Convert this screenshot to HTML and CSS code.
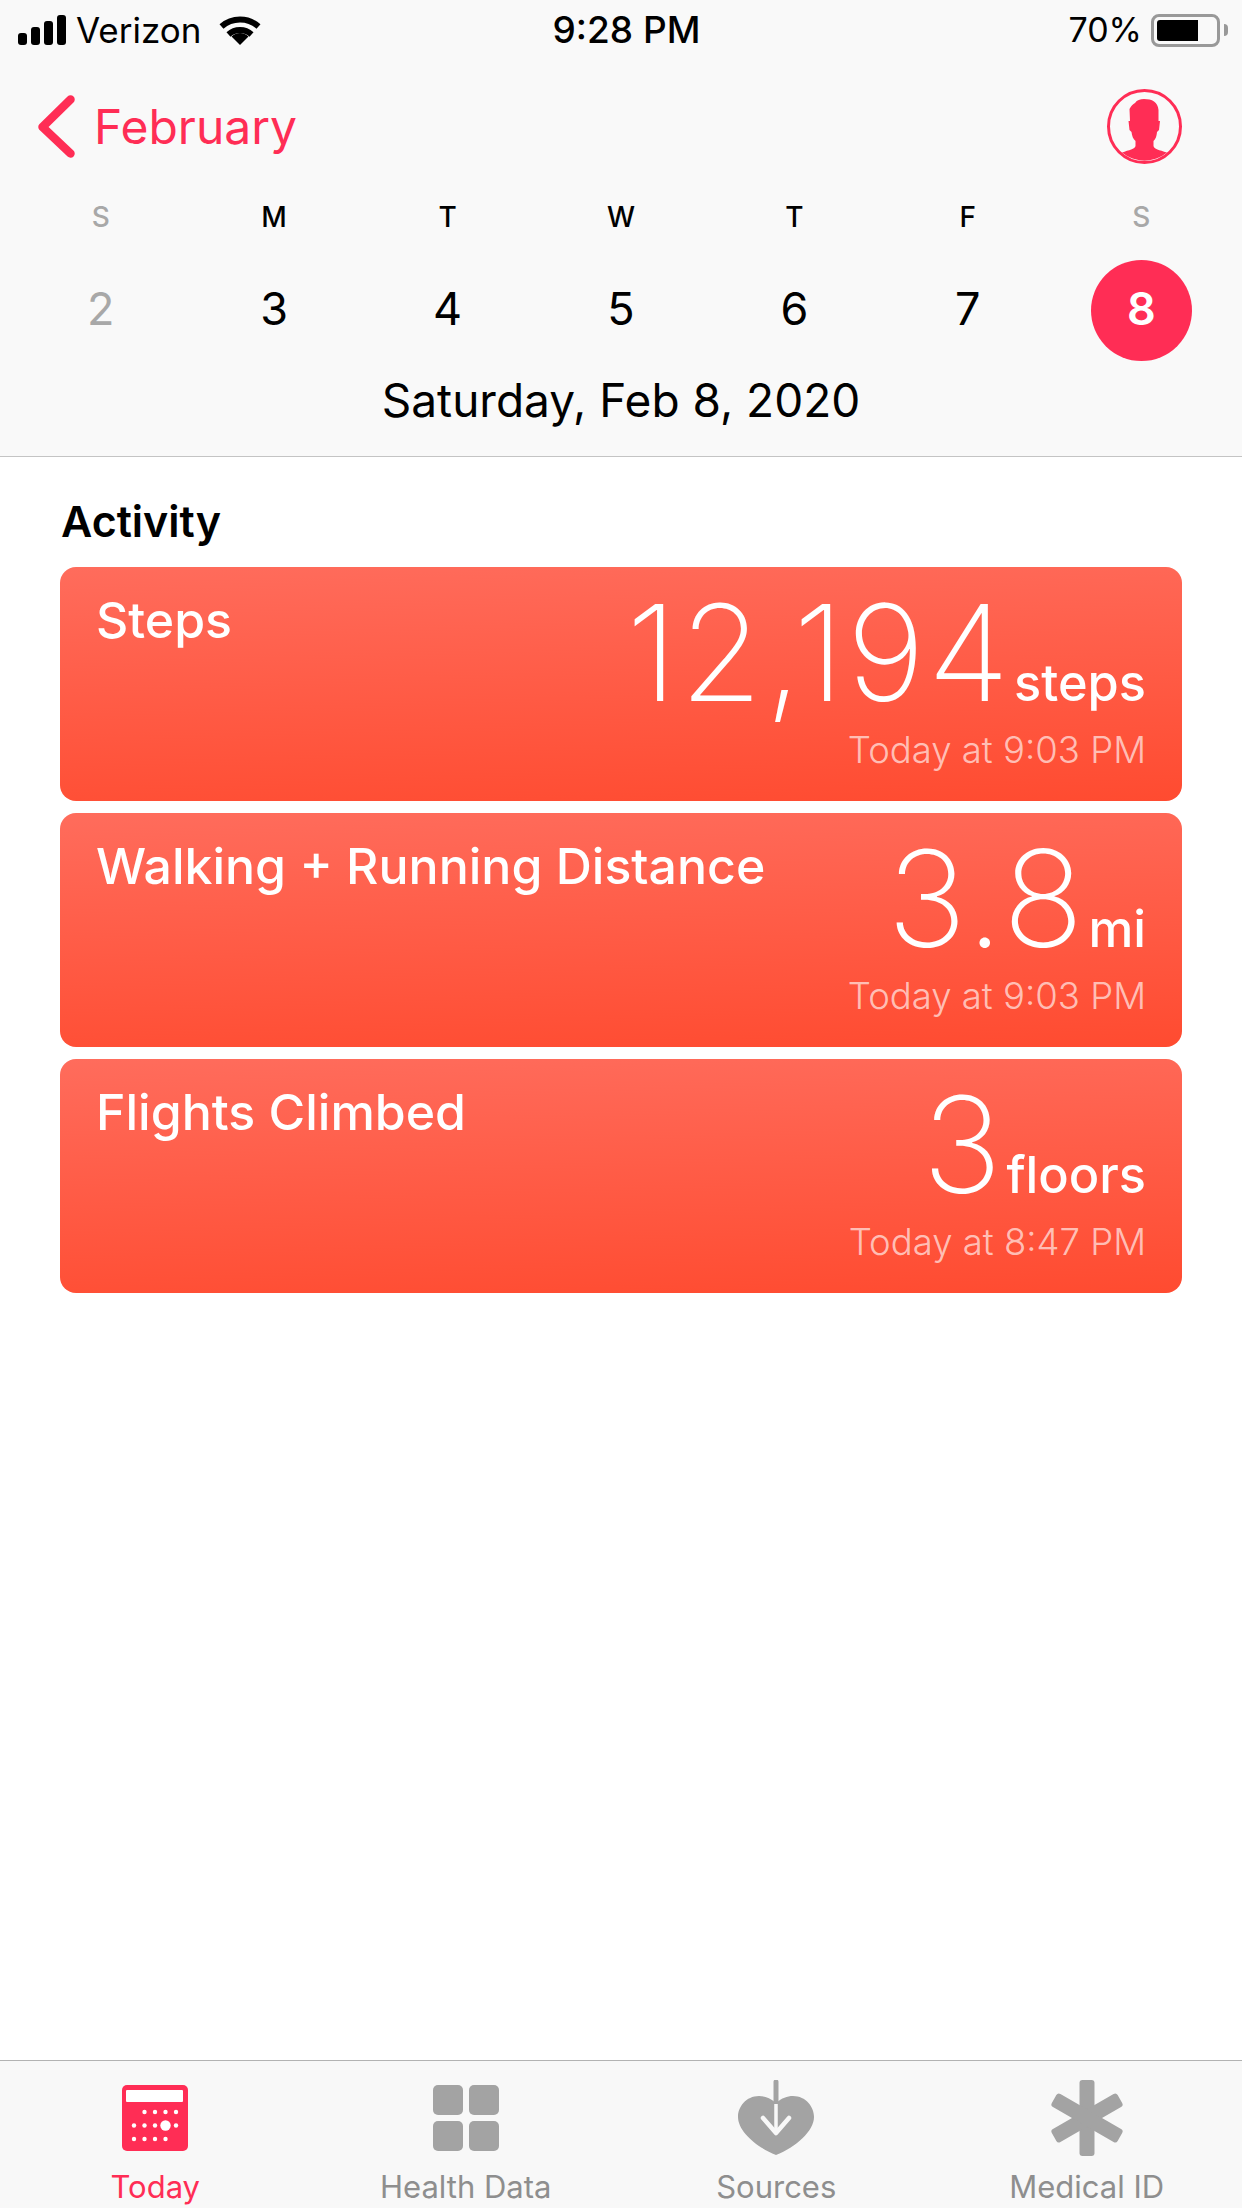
FILE: index.html
```html
<!DOCTYPE html>
<html lang="en">
<head>
  <meta charset="UTF-8">
  <meta name="viewport" content="width=device-width, initial-scale=1.0">
  <title>Today</title>
  <link rel="stylesheet" href="styles.css">
</head>
<body>
  <div class="page">
    <header class="top">
      <!-- status bar -->
      <div class="status">
        <div class="status-left">
          <svg class="signal" width="48" height="30" viewBox="0 0 48 30" fill="#000">
            <rect x="0" y="18" width="9" height="12" rx="3"/>
            <rect x="13" y="12" width="9" height="18" rx="3"/>
            <rect x="26" y="6" width="9" height="24" rx="3"/>
            <rect x="39" y="0" width="9" height="30" rx="3"/>
          </svg>
          <span class="carrier">Verizon</span>
          <svg class="wifi" width="42" height="30" viewBox="0 0 42 30" fill="none" stroke="#000" stroke-width="6">
            <path d="M2.5 11.5A28 28 0 0 1 39.5 11.5"/>
            <path d="M9.5 19.5A17 17 0 0 1 32.5 19.5"/>
            <path d="M21 30L12.5 21.5A12 12 0 0 1 29.5 21.5Z" fill="#000" stroke="none"/>
          </svg>
        </div>
        <div class="time">9:28 PM</div>
        <div class="status-right">
          <span class="percent">70%</span>
          <div class="battery"><div class="battery-fill"></div></div>
          <div class="battery-nub"></div>
        </div>
      </div>

      <div class="nav">
        <div class="back">
          <svg width="37" height="63" viewBox="0 0 37 63" fill="none" stroke="#ff2d55" stroke-width="8.5" stroke-linecap="round" stroke-linejoin="round">
            <path d="M32.5 4.5L4.5 32L32.5 58.5"/>
          </svg>
          <span class="month">February</span>
        </div>
        <svg class="profile" width="75" height="75" viewBox="0 0 75 75">
          <circle cx="37.5" cy="37.5" r="36" fill="none" stroke="#ff2d55" stroke-width="3"/>
          <path fill="#ff2d55" d="M37 10C45 10 51 13 51.5 21L51.5 32L53 32L52 41L50 43C49.5 48 48.5 50 46.5 52L46.5 57C47 60 52 61 60 63.5A35 35 0 0 1 15 63.5C22 61 28 60 28.5 57L28.5 52C26 50 25 47 24.5 43L22.5 41L21.5 32L23 32L22.5 20C24 17 26 15 28 14C30 11 33 10 37 10Z"/>
        </svg>
      </div>

      <div class="week">
        <div class="day-col">
          <span class="weekday muted">S</span>
          <span class="date muted">2</span>
        </div>
        <div class="day-col">
          <span class="weekday">M</span>
          <span class="date">3</span>
        </div>
        <div class="day-col">
          <span class="weekday">T</span>
          <span class="date">4</span>
        </div>
        <div class="day-col">
          <span class="weekday">W</span>
          <span class="date">5</span>
        </div>
        <div class="day-col">
          <span class="weekday">T</span>
          <span class="date">6</span>
        </div>
        <div class="day-col">
          <span class="weekday">F</span>
          <span class="date">7</span>
        </div>
        <div class="day-col">
          <span class="weekday muted">S</span>
          <span class="date selected">8</span>
        </div>
      </div>

      <div class="full-date">Saturday, Feb 8, 2020</div>
    </header>

    <main class="content">
      <h2 class="section-title">Activity</h2>

      <div class="card">
        <div class="card-name">Steps</div>
        <div class="card-data">
          <div class="reading"><span class="value">12,194</span><span class="unit">steps</span></div>
          <div class="stamp">Today at 9:03 PM</div>
        </div>
      </div>

      <div class="card">
        <div class="card-name">Walking + Running Distance</div>
        <div class="card-data">
          <div class="reading"><span class="value">3.8</span><span class="unit">mi</span></div>
          <div class="stamp">Today at 9:03 PM</div>
        </div>
      </div>

      <div class="card">
        <div class="card-name">Flights Climbed</div>
        <div class="card-data">
          <div class="reading"><span class="value">3</span><span class="unit">floors</span></div>
          <div class="stamp">Today at 8:47 PM</div>
        </div>
      </div>
    </main>

    <nav class="tabs">
      <div class="tab active">
        <div class="tab-icon">
          <svg width="66" height="66" viewBox="0 0 66 66">
            <rect width="66" height="66" rx="5" fill="#ff2d55"/>
            <rect x="4" y="5" width="57" height="12" rx="1" fill="#fff"/>
            <g fill="#fff">
              <circle cx="22.5" cy="27" r="2.2"/><circle cx="33" cy="27" r="2.2"/><circle cx="43.5" cy="27" r="2.2"/><circle cx="54" cy="27" r="2.2"/>
              <circle cx="12" cy="40.5" r="2.2"/><circle cx="22.5" cy="40.5" r="2.2"/><circle cx="33" cy="40.5" r="2.2"/><circle cx="43.5" cy="40.5" r="5.2"/><circle cx="54" cy="40.5" r="2.2"/>
              <circle cx="12" cy="54" r="2.2"/><circle cx="22.5" cy="54" r="2.2"/><circle cx="33" cy="54" r="2.2"/><circle cx="43.5" cy="54" r="2.2"/>
            </g>
          </svg>
        </div>
        <span class="tab-label">Today</span>
      </div>
      <div class="tab">
        <div class="tab-icon">
          <svg width="66" height="66" viewBox="0 0 66 66" fill="#a3a3a3">
            <rect width="30" height="30" rx="5"/>
            <rect x="36" width="30" height="30" rx="5"/>
            <rect y="36" width="30" height="30" rx="5"/>
            <rect x="36" y="36" width="30" height="30" rx="5"/>
          </svg>
        </div>
        <span class="tab-label">Health Data</span>
      </div>
      <div class="tab">
        <div class="tab-icon">
          <svg width="76" height="76" viewBox="0 0 76 76">
            <path fill="#a3a3a3" d="M38 23C32 18 27 16 21 16C8 16 0 27 0 37C0 51 18 67 38 75C58 67 76 51 76 37C76 27 68 16 55 16C49 16 44 18 38 23Z"/>
            <path d="M38 2V24" stroke="#a3a3a3" stroke-width="5" stroke-linecap="round"/>
            <path d="M38 24V52" stroke="#f8f8f8" stroke-width="3.5"/>
            <path d="M25 38L38 53L51 38" fill="none" stroke="#f8f8f8" stroke-width="4.5" stroke-linecap="round" stroke-linejoin="round"/>
          </svg>
        </div>
        <span class="tab-label">Sources</span>
      </div>
      <div class="tab">
        <div class="tab-icon">
          <svg width="76" height="76" viewBox="0 0 76 76" fill="#a3a3a3">
            <rect x="30.5" y="0" width="15" height="76" rx="3"/>
            <rect x="30.5" y="0" width="15" height="76" rx="3" transform="rotate(60 38 38)"/>
            <rect x="30.5" y="0" width="15" height="76" rx="3" transform="rotate(-60 38 38)"/>
          </svg>
        </div>
        <span class="tab-label">Medical ID</span>
      </div>
    </nav>
  </div>
</body>
</html>
```

FILE: styles.css
```css
body {
  margin: 0;
  background: #fff;
  font-family: Inter, "Noto Sans", sans-serif;
  color: #000;
}

.page {
  width: 1242px;
  height: 2208px;
  display: flex;
  flex-direction: column;
  overflow: hidden;
}

/* top area */
.top {
  height: 456px;
  background: #f9f9f9;
  border-bottom: 1px solid #c4c4c4;
}

.status {
  height: 60px;
  padding: 0 14px 0 18px;
  display: flex;
  align-items: center;
  justify-content: space-between;
  position: relative;
}

.status-left {
  display: flex;
  align-items: center;
}

.carrier {
  margin-left: 10px;
  font-size: 35px;
  line-height: 60px;
}

.wifi {
  margin-left: 18px;
}

.time {
  position: absolute;
  left: 11px;
  right: 0;
  text-align: center;
  font-size: 37px;
  font-weight: 500;
  line-height: 60px;
}

.status-right {
  display: flex;
  align-items: center;
}

.percent {
  font-size: 34px;
  line-height: 60px;
  margin-right: 9px;
}

.battery {
  width: 69px;
  height: 33px;
  box-sizing: border-box;
  border: 3px solid #999;
  border-radius: 8px;
  padding: 3px;
}

.battery-fill {
  width: 41px;
  height: 100%;
  background: #000;
  border-radius: 3px 0 0 3px;
}

.battery-nub {
  width: 4px;
  height: 12px;
  margin-left: 4px;
  background: #999;
  border-radius: 0 4px 4px 0;
}

.nav {
  height: 75px;
  margin-top: 29px;
  padding: 0 60px 0 38px;
  display: flex;
  align-items: center;
  justify-content: space-between;
}

.back {
  display: flex;
  align-items: center;
}

.month {
  margin-left: 19px;
  font-size: 48px;
  color: #ff2d55;
}

.week {
  margin-top: 35px;
  padding: 0 14px;
  display: grid;
  grid-template-columns: repeat(7, 1fr);
}

.day-col {
  display: flex;
  flex-direction: column;
  align-items: center;
}

.weekday {
  height: 36px;
  font-size: 28px;
  line-height: 36px;
  font-weight: 500;
}

.date {
  width: 101px;
  height: 101px;
  box-sizing: border-box;
  margin-top: 25px;
  padding-bottom: 4px;
  display: flex;
  align-items: center;
  justify-content: center;
  font-size: 45px;
}

.muted {
  color: #a8a8a8;
}

.selected {
  background: #ff2d55;
  border-radius: 50%;
  color: #fff;
  font-weight: 600;
}

.full-date {
  margin-top: 11px;
  text-align: center;
  font-size: 46px;
  line-height: 56px;
}

/* cards */
.content {
  flex: 1;
  padding: 0 60px;
}

.section-title {
  margin: 0;
  padding-top: 37px;
  padding-left: 1px;
  height: 73px;
  font-size: 43px;
  line-height: 54px;
  font-weight: 600;
}

.card {
  height: 234px;
  margin-bottom: 12px;
  padding: 24px 36px 0;
  box-sizing: border-box;
  display: flex;
  justify-content: space-between;
  border-radius: 16px;
  background: linear-gradient(178deg, #ff6c5c, #ff4b30);
  color: #fff;
}

.card-name {
  font-size: 50px;
  line-height: 58px;
  font-weight: 500;
}

.card-data {
  display: flex;
  flex-direction: column;
  align-items: flex-end;
}

.reading {
  display: flex;
  align-items: baseline;
  height: 122px;
}

.value {
  font-size: 134px;
  line-height: 122px;
  font-weight: 250;
  letter-spacing: 2.6px;
}

.unit {
  margin-left: 2px;
  font-size: 50.5px;
  font-weight: 500;
}

.stamp {
  margin-top: 16px;
  font-size: 36.5px;
  line-height: 42px;
  font-weight: 300;
  color: rgba(255, 255, 255, 0.65);
}

/* tab bar */
.tabs {
  height: 147px;
  background: #f8f8f8;
  border-top: 1px solid #b2b2b2;
  display: grid;
  grid-template-columns: repeat(4, 1fr);
}

.tab {
  display: flex;
  flex-direction: column;
  align-items: center;
}

.tab-icon {
  height: 108px;
  display: flex;
  align-items: center;
  justify-content: center;
  padding-top: 14px;
  padding-bottom: 8px;
  box-sizing: border-box;
}

.tab-label {
  font-size: 31px;
  line-height: 36px;
  color: #8e8e8e;
}

.tab.active .tab-label {
  color: #ff2d55;
}
```
